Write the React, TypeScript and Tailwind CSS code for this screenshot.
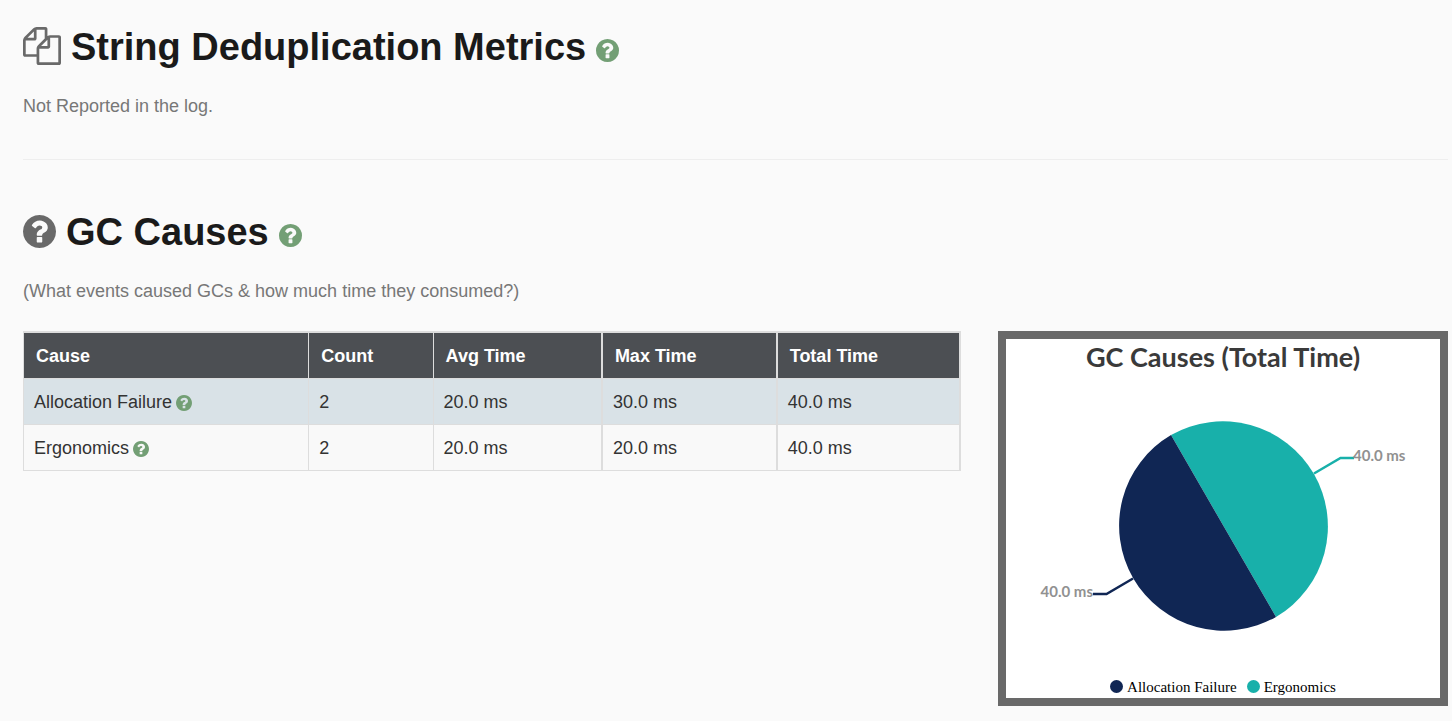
import React from "react";

type IconProps = { className?: string };

function FilesIcon({ className }: IconProps) {
  return (
    <svg viewBox="0 0 1792 1792" fill="currentColor" aria-hidden="true" className={className}>
      <path d="M1696 384q40 0 68 28t28 68v1216q0 40-28 68t-68 28h-960q-40 0-68-28t-28-68v-288h-544q-40 0-68-28t-28-68v-672q0-40 20-88t48-76l408-408q28-28 76-48t88-20h416q40 0 68 28t28 68v328q68-40 128-40h416zm-544 213l-299 299h299v-299zm-640-384l-299 299h299v-299zm196 647l316-316v-416h-384v416q0 40-28 68t-68 28h-416v640h512v-256q0-40 20-88t48-76zm956 804v-1152h-384v416q0 40-28 68t-68 28h-416v640h896z" />
    </svg>
  );
}

function QuestionIcon({ className }: IconProps) {
  return (
    <svg viewBox="128 128 1536 1536" fill="currentColor" aria-hidden="true" className={className}>
      <path d="M1024 1376v-192q0-14-9-23t-23-9h-192q-14 0-23 9t-9 23v192q0 14 9 23t23 9h192q14 0 23-9t9-23zm256-672q0-88-55.500-163t-138.500-116-170-41q-243 0-371 213-15 24 8 42l132 100q7 6 19 6 16 0 25-12 53-68 86-92 34-24 86-24 48 0 85.500 26t37.500 59q0 38-20 61t-68 45q-63 28-115.500 86.500t-52.500 125.500v36q0 14 9 23t23 9h192q14 0 23-9t9-23q0-19 21.500-49.500t54.500-49.500q32-18 49-28.500t46-35 44.500-48 28-60.500 12.500-81zm384 192q0 209-103 385.500t-279.500 279.500-385.500 103-385.500-103-279.500-279.500-103-385.500 103-385.500 279.500-279.500 385.500-103 385.500 103 279.500 279.500 103 385.500z" />
    </svg>
  );
}

function HelpLink({ label, className }: { label: string; className: string }) {
  return (
    <a href="#help" aria-label={label} className="inline-block text-[#739f75]">
      <QuestionIcon className={className} />
    </a>
  );
}

const rows = [
  { cause: "Allocation Failure", count: 2, avg: "20.0 ms", max: "30.0 ms", total: "40.0 ms" },
  { cause: "Ergonomics", count: 2, avg: "20.0 ms", max: "20.0 ms", total: "40.0 ms" },
];

function CausesTable() {
  const thin = "border-l border-[#ddd]";
  const thick = "border-l-2 border-[#ddd]";
  const head = "px-3 pt-[11px] pb-[9px]";
  const cell = "border-t px-[10px] pt-[11px] pb-[9px]";
  return (
    <table className="min-w-0 flex-1 table-fixed border-separate border-spacing-0 border border-t-2 border-r-2 border-[#ddd] text-left text-[18px] leading-[25px]">
      <colgroup>
        <col className="w-[30.4%]" />
        <col className="w-[13.3%]" />
        <col className="w-[18%]" />
        <col className="w-[18.7%]" />
        <col className="w-[19.6%]" />
      </colgroup>
      <thead className="bg-[#4c4f53] text-white">
        <tr>
          <th scope="col" className={head}>Cause</th>
          <th scope="col" className={`${head} ${thin}`}>Count</th>
          <th scope="col" className={`${head} ${thin}`}>Avg Time</th>
          <th scope="col" className={`${head} ${thick}`}>Max Time</th>
          <th scope="col" className={`${head} ${thick}`}>Total Time</th>
        </tr>
      </thead>
      <tbody className="text-[#333]">
        {rows.map((r) => (
          <tr key={r.cause} className="odd:bg-[#d9e2e7] even:bg-[#f9f9f9]">
            <td className={`${cell} border-[#ddd]`}>
              <span className="flex items-center gap-1">
                {r.cause}
                <HelpLink label={`About ${r.cause}`} className="size-4" />
              </span>
            </td>
            <td className={`${cell} ${thin}`}>{r.count}</td>
            <td className={`${cell} ${thin}`}>{r.avg}</td>
            <td className={`${cell} ${thick}`}>{r.max}</td>
            <td className={`${cell} ${thick}`}>{r.total}</td>
          </tr>
        ))}
      </tbody>
    </table>
  );
}

function CausesChart() {
  return (
    <figure className="flex w-[450px] shrink-0 flex-col border-8 border-[#696969] bg-white">
      <h2 className="text-center font-['Lato',sans-serif] text-[27px] leading-9 font-bold text-[#3a3a3a]">
        GC Causes (Total Time)
      </h2>
      <svg viewBox="0 0 434 300" className="w-full font-['Lato',sans-serif]" role="img" aria-label="GC causes by total time">
        <path d="M217.500 151L165 60.070A105 105 0 0 1 270 241.930Z" fill="#18b0aa" />
        <path d="M217.500 151L270 241.930A105 105 0 0 1 165 60.070Z" fill="#102654" />
        <path d="M308 98.500L334.500 83H348" fill="none" stroke="#18b0aa" strokeWidth="2.500" />
        <path d="M127 203.500L100.500 219H87" fill="none" stroke="#102654" strokeWidth="2.500" />
        <text x="347" y="86" fontSize="15" fontWeight="700" fill="#919191">40.0 ms</text>
        <text x="87" y="222" fontSize="15" fontWeight="700" textAnchor="end" fill="#919191">40.0 ms</text>
      </svg>
      <figcaption className="flex h-[23px] items-center justify-center gap-[10px] font-['Liberation_Serif',serif] text-[15px] leading-4 text-black">
        <span className="flex items-center gap-1">
          <span className="size-[13px] rounded-full bg-[#102654]" />
          Allocation Failure
        </span>
        <span className="flex items-center gap-1">
          <span className="size-[13px] rounded-full bg-[#18b0aa]" />
          Ergonomics
        </span>
      </figcaption>
    </figure>
  );
}

export default function App() {
  return (
    <main className="min-h-screen bg-[#fafafa] pt-6 pr-1 pb-4 pl-[23px] font-['Liberation_Sans',Arial,sans-serif]">
      <section className="border-b border-[#eee] pb-10">
        <h1 className="flex items-center gap-[10px] text-[38px] leading-[46px] font-bold text-[#1a1a1a]">
          <span className="flex pb-0.5">
            <FilesIcon className="size-[38px] text-[#696969]" />
          </span>
          String Deduplication Metrics
          <span className="flex pt-1.5">
            <HelpLink label="About string deduplication" className="size-[23px]" />
          </span>
        </h1>
        <p className="mt-6 text-[18px] leading-[25px] text-[#777]">Not Reported in the log.</p>
      </section>
      <section className="pt-[49px]">
        <h1 className="flex items-center gap-[10px] text-[38px] leading-[46px] font-bold text-[#1a1a1a]">
          <span className="flex pb-0.5">
            <QuestionIcon className="size-[33px] text-[#696969]" />
          </span>
          GC Causes
          <span className="flex pt-1.5">
            <HelpLink label="About GC causes" className="size-[23px]" />
          </span>
        </h1>
        <p className="mt-6 text-[18px] leading-[25px] text-[#777]">
          (What events caused GCs &amp; how much time they consumed?)
        </p>
        <div className="mt-[27px] flex items-start gap-[37px]">
          <CausesTable />
          <CausesChart />
        </div>
      </section>
    </main>
  );
}
